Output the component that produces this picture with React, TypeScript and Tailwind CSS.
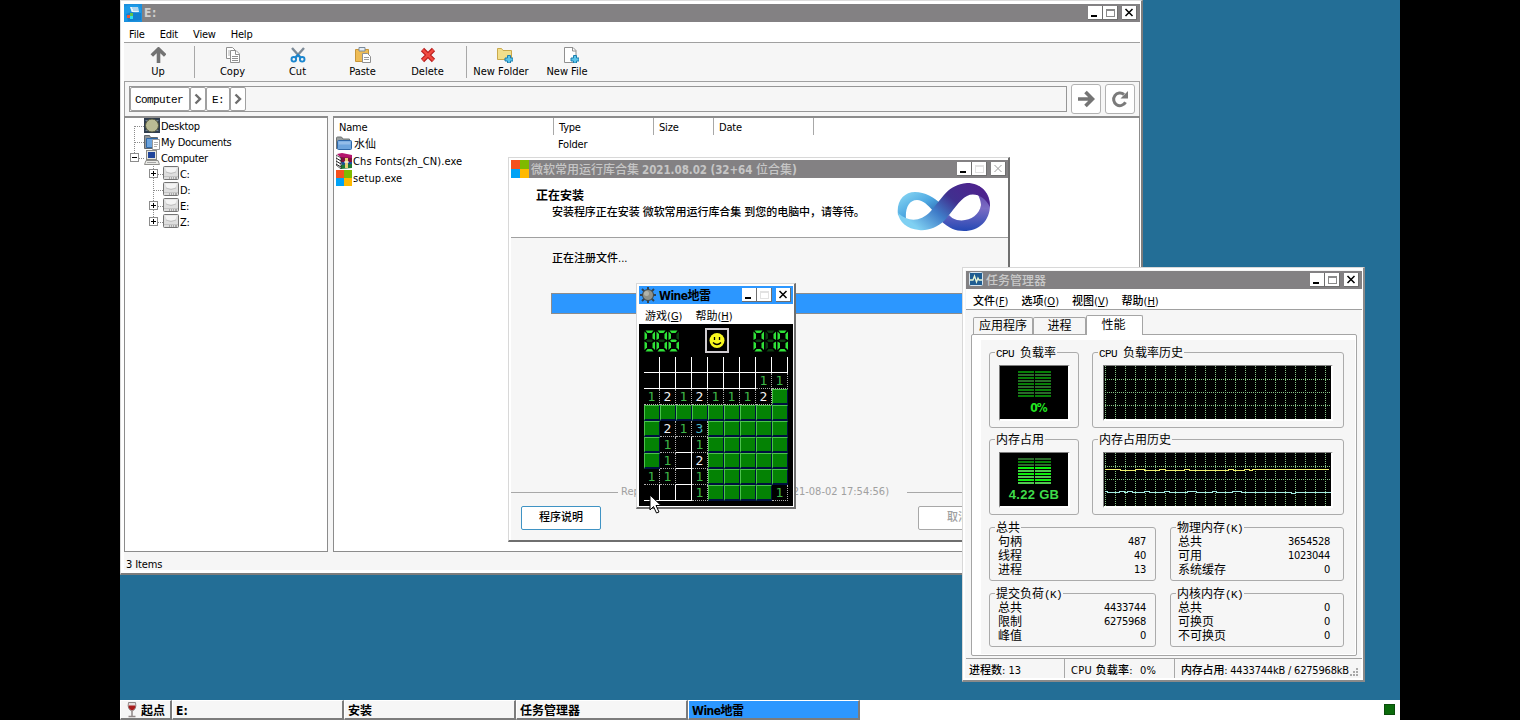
import React from "react";

const UI_FONT = "font-['DejaVu_Sans_Condensed','DejaVu_Sans','Noto_Sans_CJK_SC',sans-serif]";
const MONO_FONT = "font-['Liberation_Mono','Noto_Sans_CJK_SC',monospace]";

interface WindowButtonsProps {
  dimMax?: boolean;
  dimClose?: boolean;
}

const WindowButtons: React.FC<WindowButtonsProps> = ({ dimMax, dimClose }) => {
  const box = "h-[14px] w-[15px] border-r border-b border-[#6e6e6e] bg-white";
  return (
    <div className={`ml-auto flex shrink-0 pt-[2px] ${dimMax ? "pr-[2px]" : "pr-[3px]"}`}>
      <svg className={box} viewBox="0 0 14 13" shapeRendering="crispEdges">
        <rect x="3" y="9" width="6" height="2" fill="#000" />
      </svg>
      <svg className={box} viewBox="0 0 14 13" shapeRendering="crispEdges">
        <path d="M3.5 3.5h8v7h-8z" fill="none" stroke={dimMax ? "#e2e2e2" : "#8a8a8a"} />
        <path d="M3 3h9v1.5H3z" fill={dimMax ? "#e2e2e2" : "#8a8a8a"} />
      </svg>
      <svg className={`${box} ml-[4px]`} viewBox="0 0 14 13">
        <path d="M3.5 3l7 7M10.5 3l-7 7" stroke={dimClose ? "#9a9a9a" : "#000"} strokeWidth={dimClose ? 1 : 1.5} />
      </svg>
    </div>
  );
};

const WindowsFlag = ({ size }: { size: number }) => (
  <svg width={size} height={size} viewBox="0 0 16 16" className="shrink-0" shapeRendering="crispEdges">
    <rect width="8" height="8" fill="#f6511d" />
    <rect x="8" width="8" height="8" fill="#7fba00" />
    <rect y="8" width="8" height="8" fill="#00a2f5" />
    <rect x="8" y="8" width="8" height="8" fill="#ffb900" />
  </svg>
);

/* ---------- file manager ---------- */

const ExplorerIcon = () => (
  <svg width="18" height="18" viewBox="0 0 18 18">
    <rect width="18" height="18" fill="#1b8fdc" />
    <path d="M0 3l5-2h9l3 3v10l-17 3z" fill="#1b9ae8" />
    <path d="M6 3h8l1 5-7 1z" fill="#e8f4fb" />
    <path d="M8 4h6M9 6h6" stroke="#7fb9e0" />
    <path d="M2 10l6-2 9 1v7l-13 1z" fill="#1280cf" />
    <rect x="3" y="11" width="3" height="3" fill="#ee5535" />
    <rect x="6" y="9" width="3" height="3" fill="#62c14b" />
    <rect x="6" y="12" width="3" height="3" fill="#2be0f0" />
  </svg>
);

const icons: Record<string, React.ReactNode> = {
  up: <path d="M8.500 16V3M1.800 8.500L8.500 2l6.700 6.500" fill="none" stroke="#737373" strokeWidth="3.600" />,
  copy: (
    <g fill="#fff" stroke="#909090">
      <path d="M1.500.5h6l3 3v8h-9z" />
      <path d="M3 4h2M3 6h2M3 8h2" stroke="#b5b5b5" />
      <path d="M5.500 3.500h5.500l3.500 3.500v8.500h-9z" />
      <path d="M10.500 4v3.500h4M7 9.500h6M7 11.500h6M7 13.500h6" />
    </g>
  ),
  cut: (
    <g fill="none">
      <path d="M2 1l8 9M14 1l-8 9" stroke="#7d8b98" strokeWidth="2.400" />
      <circle cx="3.800" cy="12.300" r="2.300" stroke="#1b86cf" strokeWidth="1.900" />
      <circle cx="12.200" cy="12.300" r="2.300" stroke="#1b86cf" strokeWidth="1.900" />
      <path d="M5.500 10.500L8 8l2.500 2.500" stroke="#1b86cf" strokeWidth="2.200" />
    </g>
  ),
  paste: (
    <g>
      <path d="M.5 2.500h13v12h-13z" fill="#eebc56" stroke="#c79539" />
      <path d="M4 .5h6v3.500H4z" fill="#e6edf4" stroke="#7b8b9b" />
      <path d="M7.500 6.500h5l3 3v6h-8z" fill="#fff" stroke="#909090" />
      <path d="M9 10.500h5M9 12.500h5" stroke="#9e9e9e" />
    </g>
  ),
  delete: (
    <g fill="none">
      <path d="M2.500 2.500l11 11M13.500 2.500l-11 11" stroke="#b81c1c" strokeWidth="4.600" />
      <path d="M2.800 2.800l10.400 10.400M13.200 2.800L2.800 13.200" stroke="#f04a40" strokeWidth="2.600" />
    </g>
  ),
  newFolder: (
    <g>
      <path d="M.5 1.500h4l1.500 2h8.500v9H.5z" fill="#f2df8b" stroke="#c9a94c" />
      <path d="M10.500 8.500h3v2.500H16v3h-2.500v2h-3v-2H8v-3h2.500z" fill="#5bc4ea" stroke="#1d7fae" />
    </g>
  ),
  newFile: (
    <g>
      <path d="M1.500.5h8.500l3 3v12H1.500z" fill="#fff" stroke="#909090" />
      <path d="M9.500.5v3.500H13" fill="none" stroke="#909090" />
      <path d="M10.500 8.500h3v2.500H16v3h-2.500v2h-3v-2H8v-3h2.500z" fill="#5bc4ea" stroke="#1d7fae" />
    </g>
  ),
};

const ToolButton = ({ icon, label, className = "w-[65px]" }: { icon: string; label: string; className?: string }) => (
  <div className={`flex flex-col items-center pt-[4px] ${className}`}>
    <svg width="16" height="16" viewBox="0 0 16 16">
      {icons[icon]}
    </svg>
    <span className="mt-[2px] leading-[14px] whitespace-nowrap">{label}</span>
  </div>
);

const DesktopIcon = () => (
  <svg width="16" height="16" viewBox="0 0 16 16">
    <rect width="16" height="15" fill="#2f3d4e" />
    <path d="M1 2h3v3M15 2h-3v3M1 13h3v-3M15 13h-3v-3" fill="#6f8296" />
    <circle cx="8" cy="7.500" r="6.500" fill="#b9bb94" stroke="#55583f" />
  </svg>
);

const DocumentsIcon = () => (
  <svg width="16" height="16" viewBox="0 0 16 16">
    <path d="M.5 14.500v-13h5l1 2h7v11z" fill="#8f9498" stroke="#60676d" />
    <path d="M2.500 4.500h11v9h-11z" fill="#6ba3dd" stroke="#2f67a5" />
    <path d="M8.500 5.500h7v10h-7z" fill="#fff" stroke="#9a9a9a" />
    <path d="M10 8.500h4M10 10.500h4M10 12.500h3" stroke="#b0b0b0" />
  </svg>
);

const ComputerIcon = () => (
  <svg width="16" height="16" viewBox="0 0 16 16">
    <rect x="2.500" y=".5" width="10" height="9" fill="#e6e6e0" stroke="#8b8b86" />
    <rect x="4" y="2" width="7" height="6" fill="#20459b" />
    <path d="M2 10.500h12l1.500 4H.5z" fill="#ebebe7" stroke="#8e8e8b" />
    <path d="M3 12.500h9" stroke="#a6a6a6" />
  </svg>
);

const DriveIcon = () => (
  <svg width="16" height="16" viewBox="0 0 16 16">
    <rect x=".5" y=".5" width="15" height="13" rx="1" fill="#dedede" stroke="#747474" />
    <path d="M2 1.500h12l-2 5H4z" fill="#f4f4f4" />
    <path d="M3 6q5 3 10 0" fill="none" stroke="#c0c0c0" />
    <path d="M1 10.500h14" stroke="#c4c4c4" />
    <path d="M6 12h1M8 12h1M10 12h1M12 12h2" stroke="#777" />
  </svg>
);

const FolderIcon = () => (
  <svg width="16" height="16" viewBox="0 0 16 16">
    <path d="M.5 13V2q0-1 1-1h4l1.500 2h6.500v3" fill="#999e9e" stroke="#6f7475" />
    <rect x="1.500" y="4.500" width="14" height="9" rx="1" fill="#6ea5dd" stroke="#2f68a8" />
    <path d="M2.500 5.500h12v3h-12z" fill="#94bde8" />
  </svg>
);

const ArchiveIcon = () => (
  <svg width="16" height="16" viewBox="0 0 16 16">
    <path d="M1 1l5-1 10 2v4L5 5z" fill="#b5156d" />
    <path d="M4 4l12 1v4L5 9z" fill="#7e123f" />
    <path d="M5 9h11v3l-10 1z" fill="#1c4f96" />
    <path d="M4 12l12-1v4l-11 1z" fill="#1f7a35" />
    <path d="M0 2l5 3v11l-5-4z" fill="#fff" stroke="#222" strokeWidth=".7" />
    <path d="M0 5l5 3M0 8l5 3M0 11l5 3" stroke="#222" />
    <path d="M9 5h3v10H9z" fill="#e8cf79" />
    <path d="M8 9h5" stroke="#fff" />
  </svg>
);

// Dotted connector lines drawn in front of every tree node
const TreeLines = ({ width, d, box }: { width: number; d: string; box?: "+" | "-" }) => (
  <svg width={width} height="16" viewBox={`0 0 ${width} 16`} shapeRendering="crispEdges" className="shrink-0">
    <path d={d} fill="none" stroke="#8c8c8c" strokeDasharray="1 1" />
    {box && (
      <g>
        <rect x={width - 13.5} y="3.500" width="8" height="8" fill="#fff" stroke="#8c8c8c" />
        <path d={box === "+" ? `M${width - 12} 7.500h5M${width - 9.5} 5v5` : `M${width - 12} 7.500h5`} stroke="#000" />
      </g>
    )}
  </svg>
);

const FileTree = () => (
  <div className="w-[204px] border border-t-2 border-[#8c8c8c] bg-white leading-[17px] tracking-[-0.300px]">
    <div className="flex h-[16px]">
      <TreeLines width={19} d="M9.500 8v8M9.500 8.500h10" />
      <DesktopIcon />
      <span className="ml-[1px]">Desktop</span>
    </div>
    <div className="flex h-[16px]">
      <TreeLines width={19} d="M9.500 0v16M9.500 8.500h10" />
      <DocumentsIcon />
      <span className="ml-[1px]">My Documents</span>
    </div>
    <div className="flex h-[16px]">
      <TreeLines width={19} d="M9.500 0v8M9.500 8.500h10" box="-" />
      <ComputerIcon />
      <span className="ml-[1px]">Computer</span>
    </div>
    {["C:", "D:", "E:", "Z:"].map((drive) => (
      <div className="flex h-[16px]" key={drive}>
        <TreeLines
          width={38}
          d={drive === "Z:" ? "M28.500 0v8M28.500 8.500h10" : "M28.500 0v16M28.500 8.500h10"}
          box={drive === "D:" ? undefined : "+"}
        />
        <DriveIcon />
        <span className="ml-[1px]">{drive}</span>
      </div>
    ))}
  </div>
);

const FileList = () => (
  <div className="ml-[5px] flex-1 border border-t-2 border-[#8c8c8c] bg-white">
    <div className="flex h-[17px] leading-[19px] tracking-[-0.200px]">
      <div className="w-[220px] border-r border-[#a8a8a8] pl-[5px]">Name</div>
      <div className="w-[100px] border-r border-[#a8a8a8] pl-[5px]">Type</div>
      <div className="w-[60px] border-r border-[#a8a8a8] pl-[5px]">Size</div>
      <div className="w-[100px] border-r border-[#a8a8a8] pl-[5px]">Date</div>
    </div>
    <div className="mt-[1px] pl-[2px] leading-[17px] tracking-[0.100px]">
      <div className="flex h-[17px]">
        <FolderIcon />
        <span className="ml-[2px] w-[204px]">水仙</span>
        <span className="tracking-[-0.200px]">Folder</span>
      </div>
      <div className="flex h-[17px]">
        <ArchiveIcon />
        <span className="ml-[1px]">Chs Fonts(zh_CN).exe</span>
      </div>
      <div className="flex h-[17px]">
        <WindowsFlag size={16} />
        <span className="ml-[1px]">setup.exe</span>
      </div>
    </div>
  </div>
);

const Chevron = () => (
  <div className="flex w-[16px] items-center justify-center rounded-[2px] border border-[#a0a0a0] bg-white">
    <svg width="8" height="12" viewBox="0 0 8 12">
      <path d="M1.500 1.500L6 6l-4.500 4.500" fill="none" stroke="#6e6e6e" strokeWidth="2.400" />
    </svg>
  </div>
);

const FileManager = () => (
  <div className="absolute top-0 left-0 flex h-[575px] w-[1023px] flex-col border-t border-r-2 border-b-2 border-l border-[#7d7d7d] border-t-[#dcdcdc] border-l-[#dcdcdc] bg-white pt-[3px] pr-px pl-[3px]">
    <div className="flex h-[18px] shrink-0 bg-[#838183] text-[#cfcfcf]">
      <ExplorerIcon />
      <span className="ml-[2px] text-[12px] leading-[19px] font-bold tracking-[0.500px]">E:</span>
      <WindowButtons />
    </div>
    <div className="flex h-[20px] shrink-0 gap-[15px] pl-[5px] leading-[25px] tracking-[-0.200px]">
      <span>File</span>
      <span>Edit</span>
      <span>View</span>
      <span>Help</span>
    </div>
    <div className="flex h-[39px] shrink-0 border-t border-[#a0a0a0] bg-[#f6f6f6]">
      <ToolButton icon="up" label="Up" className="w-[68px]" />
      <div className="my-[3px] ml-[2px] w-px bg-[#a8a8a8]" />
      <div className="w-[5px]" />
      <ToolButton icon="copy" label="Copy" />
      <ToolButton icon="cut" label="Cut" />
      <ToolButton icon="paste" label="Paste" />
      <ToolButton icon="delete" label="Delete" />
      <div className="my-[3px] ml-[6px] w-px bg-[#a8a8a8]" />
      <ToolButton icon="newFolder" label="New Folder" className="w-[68px] [&>svg]:ml-[7px]" />
      <ToolButton icon="newFile" label="New File" className="w-[64px] [&>svg]:ml-[7px]" />
    </div>
    <div className="flex h-[35px] shrink-0 border-t border-r border-l border-[#a0a0a0] bg-[#f6f6f6] px-[4px]">
      <div className="mt-[4px] flex h-[26px] w-[939px] border border-[#969696]">
        <div
          className={`w-[60px] rounded-[2px] border border-[#a0a0a0] bg-white pl-[4px] text-[11px] leading-[24px] tracking-[-0.600px] ${MONO_FONT}`}
        >
          Computer
        </div>
        <Chevron />
        <div
          className={`w-[24px] rounded-[2px] border border-[#a0a0a0] bg-white pl-[5px] text-[11px] leading-[24px] tracking-[-0.600px] ${MONO_FONT}`}
        >
          E:
        </div>
        <Chevron />
      </div>
      <div className="mt-[2px] ml-[4px] flex size-[30px] items-center justify-center rounded-[3px] border border-[#b2b2b2] bg-white">
        <svg width="18" height="18" viewBox="0 0 18 18" fill="none" stroke="#747474" strokeWidth="3.600">
          <path d="M1 9h14M8.500 2L15.500 9l-7 7" />
        </svg>
      </div>
      <div className="mt-[2px] ml-[4px] flex size-[30px] items-center justify-center rounded-[3px] border border-[#b2b2b2] bg-white">
        <svg width="18" height="18" viewBox="0 0 18 18">
          <path d="M14.500 12.300A6.300 6.300 0 1 1 13 4.500" fill="none" stroke="#7a7a7a" strokeWidth="3" />
          <path d="M17 1v7.500H9.500z" fill="#7a7a7a" />
        </svg>
      </div>
    </div>
    <div className="flex h-[436px] shrink-0 bg-[#f6f6f6]">
      <FileTree />
      <FileList />
    </div>
    <div className="h-[18px] shrink-0 bg-[#f6f6f6] pl-[2px] leading-[25px] tracking-[-0.100px]">3 Items</div>
  </div>
);

/* ---------- installer ---------- */

const InfinityLogo = () => (
  <svg width="94" height="48" viewBox="0 0 94 48">
    <defs>
      <linearGradient id="loopLeft" x1="0" y1="0" x2="1" y2="1">
        <stop offset="0" stopColor="#8fdcf5" />
        <stop offset=".5" stopColor="#4fa9e2" />
        <stop offset="1" stopColor="#1d4f9e" />
      </linearGradient>
      <linearGradient id="loopBand" x1="0" y1=".6" x2="1" y2="0">
        <stop offset="0" stopColor="#7fd0f2" />
        <stop offset=".3" stopColor="#3f7cc8" />
        <stop offset=".55" stopColor="#40308f" />
        <stop offset="1" stopColor="#531d8d" />
      </linearGradient>
      <linearGradient id="loopEnd" x1="0" y1="0" x2="0" y2="1">
        <stop offset="0" stopColor="#5b3fa5" />
        <stop offset=".5" stopColor="#7a6cc4" />
        <stop offset="1" stopColor="#2448b4" />
      </linearGradient>
    </defs>
    <path d="M1 32C-1 18 7 9 18 9C28 9 37 14 44 21L36 28C31 22 26 17 20 17C12 17 8 25 9 36Z" fill="url(#loopLeft)" />
    <path
      d="M44 38C52 45 58 48 67 48C82 48 93 38 93 22C93 14 89 7 82 3C76 6 84 14 84 22C82 33 72 39 60 37C56 36 54 34 52 32Z"
      fill="url(#loopEnd)"
    />
    <path
      d="M1 30C12 40 24 38 33 29C46 15 50 2 70 0C84 0 93 10 93 24C88 14 78 9 70 13C62 17 56 28 48 37C40 45 30 48 22 47C10 46 2 39 1 30Z"
      fill="url(#loopBand)"
    />
  </svg>
);

const Installer = () => (
  <div className="absolute top-[157px] left-[388px] flex h-[385px] w-[502px] flex-col border-t border-r-2 border-b-2 border-l border-[#6f6f6f] border-t-[#d8d8d8] border-l-[#d8d8d8] bg-[#f6f6f6] pt-[2px] pl-[2px] shadow-[inset_1px_1px_0_1px_#fff]">
    <div className="flex h-[18px] shrink-0 bg-[#838183] text-[#c6c6c6]">
      <WindowsFlag size={18} />
      <span className="ml-[2px] text-[12px] leading-[20px] font-medium whitespace-pre">
        微软常用运行库合集
        <span className="ml-[3px] text-[11.500px] font-bold tracking-[-0.050px]">2021.08.02 (32+64 </span>
        位合集<span className="font-bold">)</span>
      </span>
      <WindowButtons dimMax dimClose />
    </div>
    <div className="flex h-[60px] shrink-0 border-b border-[#a0a0a0] bg-white">
      <div className="w-[386px] pt-[10px] pl-[25px]">
        <div className="text-[12px] leading-[17px] font-bold">正在安装</div>
        <div className="pl-[16px] leading-[16px] font-medium tracking-[-0.050px] whitespace-pre">
          安装程序正在安装 微软常用运行库合集 到您的电脑中，请等待。
        </div>
      </div>
      <div className="pt-[5px]">
        <InfinityLogo />
      </div>
    </div>
    <div className="mt-[13px] pl-[41px] leading-[16px] font-medium">正在注册文件...</div>
    <div className="mt-[26px] ml-[40px] h-[21px] w-[420px] shrink-0 border border-[#8c8c8c] bg-[#2c97ff]" />
    <div className="mt-[169px] flex items-center leading-[18px] text-[#a0a0a0]">
      <div className="h-px w-[107px] bg-[#a8a8a8]" />
      <span className="ml-[3px] w-[162px]">Rep</span>
      <span className="w-[106px] text-right whitespace-nowrap">21-08-02 17:54:56)</span>
      <div className="ml-[18px] h-px flex-1 bg-[#a8a8a8]" />
    </div>
    <div className="mt-[5px] flex justify-between pr-[10px] pl-[10px] font-medium">
      <button className="h-[24px] w-[80px] rounded-[2px] border border-[#3f93c4] bg-white">程序说明</button>
      <button className="h-[24px] w-[80px] rounded-[2px] border border-[#a8a8a8] bg-white text-[#a0a0a0]">取消</button>
    </div>
  </div>
);

/* ---------- minesweeper ---------- */

// "." is an opened empty field, "#" is still covered
const FIELD = [
  ".........",
  ".......11",
  "12121112#",
  "#########",
  "#213#####",
  "#1.1#####",
  "#1.2#####",
  "11.1#####",
  "...1####1",
];

const DIGIT_COLORS: Record<string, string> = {
  "1": "text-[#3fb548]",
  "2": "text-[#f2f2f2]",
  "3": "text-[#49b5c4]",
};

const Field = ({ value }: { value: string }) => {
  if (value === "#") {
    return (
      <div className="size-[16px] border-t border-r border-b-2 border-l border-[#001040] border-t-[#4cc24c] border-l-[#4cc24c] bg-[#048204]" />
    );
  }
  if (value === ".") {
    return <div className="size-[16px] border-r border-b border-white" />;
  }
  return (
    <div
      className={`size-[16px] border-r border-b border-dotted border-[#b0b0b0] text-center font-['DejaVu_Sans_Mono',monospace] text-[13px] leading-[16px] ${DIGIT_COLORS[value]}`}
    >
      {value}
    </div>
  );
};

const SEGMENTS = [
  "M1.500.5h8l-2 2.500h-4z",
  "M11 1.500v8.500l-2.500-1.500V4z",
  "M11 11.500v8.500l-2.500-2.500V13z",
  "M1.500 21.500h8l-2-2.500h-4z",
  "M.5 11.500v8.500L3 17.500V13z",
  "M.5 1.500v8.500L3 8.500V4z",
  "M2 10.800l1.500-1.200h4l1.500 1.200L7.500 12h-4z",
];

const LIT: Record<string, number[]> = {
  "0": [0, 1, 2, 3, 4, 5],
  "1": [1, 2],
  "6": [0, 2, 3, 4, 5, 6],
};

const Led = ({ value }: { value: string }) => (
  <div className="flex">
    {value.split("").map((digit, i) => (
      <svg key={i} width="12" height="22" viewBox="0 0 12 22">
        {SEGMENTS.map((d, s) => (
          <path key={s} d={d} fill={LIT[digit].includes(s) ? "#2fe338" : "#0b3f10"} />
        ))}
      </svg>
    ))}
  </div>
);

const Minesweeper = () => (
  <div className="absolute top-[283px] left-[516px] flex h-[226px] w-[160px] flex-col border-t border-r-2 border-b-2 border-l border-[#6f6f6f] border-t-[#d8d8d8] border-l-[#d8d8d8] bg-white pt-[2px] pr-px pb-px pl-[2px]">
    <div className="flex h-[18px] shrink-0 bg-[#2c97ff]">
      <svg width="18" height="18" viewBox="0 0 18 18">
        <path d="M9 1v16M1 9h16M3 3l12 12M15 3L3 15" stroke="#33424f" strokeWidth="2" />
        <circle cx="9" cy="9" r="5.500" fill="#8e9188" stroke="#3c4548" />
        <circle cx="7.500" cy="7.500" r="2.500" fill="#b0b3aa" />
      </svg>
      <span className="ml-[2px] text-[12px] leading-[20px] font-bold tracking-[-0.500px]">Wine地雷</span>
      <WindowButtons dimMax />
    </div>
    <div className="flex h-[20px] shrink-0 gap-[13px] pl-[6px] leading-[25px]">
      <span>
        游戏(<u>G</u>)
      </span>
      <span>
        帮助(<u>H</u>)
      </span>
    </div>
    <div className="flex-1 bg-black">
      <div className="flex h-[33px] items-start justify-between pr-[4px] pl-[5px]">
        <div className="pt-[6px]">
          <Led value="006" />
        </div>
        <svg width="24" height="25" viewBox="0 0 24 25" className="mt-[4px]">
          <rect x="1" y="1" width="22" height="23" fill="#000" stroke="#d0ccd0" strokeWidth="2" />
          <circle cx="12" cy="12.500" r="7.500" fill="#f7f71e" />
          <path d="M9.500 9v3M14.500 9v3M8 14.500q4 4 8 0" fill="none" stroke="#000" strokeWidth="1.300" />
        </svg>
        <div className="pt-[6px]">
          <Led value="010" />
        </div>
      </div>
      <div className="ml-[5px] grid w-[144px] grid-cols-9">
        {FIELD.join("")
          .split("")
          .map((value, i) => (
            <Field key={i} value={value} />
          ))}
      </div>
    </div>
  </div>
);

/* ---------- task manager ---------- */

interface GroupBoxProps {
  title: string;
  className: string;
  children: React.ReactNode;
}

const GroupBox: React.FC<GroupBoxProps> = ({ title, className, children }) => (
  <div className={`rounded-[3px] border border-[#ababab] ${className}`}>
    <div className="-mt-[7px] ml-[5px] h-[14px] w-fit bg-[#f6f6f6] px-px text-[12px] leading-[14px] whitespace-pre">
      {title.split(/([\x20-\x7e]+)/).map((part, i) => (
        <span key={i} className={i % 2 ? `text-[11px] tracking-[-0.600px] ${MONO_FONT}` : ""}>
          {part}
        </span>
      ))}
    </div>
    {children}
  </div>
);

const Screen = ({ children, className }: { children: React.ReactNode; className: string }) => (
  <div
    className={`border-t border-r-2 border-b-2 border-l border-white border-t-[#7d7d7d] border-l-[#7d7d7d] bg-black ${className}`}
  >
    {children}
  </div>
);

const Meter = ({ colors, children }: { colors: string[]; children: React.ReactNode }) => (
  <Screen className="mt-[5px] ml-[9px] flex h-[56px] w-[71px] flex-col items-center pt-[5px]">
    <svg width="33" height="27" viewBox="0 0 33 27" shapeRendering="crispEdges" className="shrink-0">
      {colors.map((color, i) => (
        <g key={i} fill={color}>
          <rect y={i * 3} width="16" height="2" />
          <rect x="17" y={i * 3} width="16" height="2" />
        </g>
      ))}
    </svg>
    {children}
  </Screen>
);

const History = ({ rows, children }: { rows: number[]; children?: React.ReactNode }) => (
  <Screen className="mt-[5px] ml-[10px] h-[56px] w-[230px]">
    <svg width="227" height="53" viewBox="0 0 227 53" shapeRendering="crispEdges">
      <g stroke="#86c486" strokeDasharray="1 1">
        {Array.from({ length: 23 }, (_, i) => (
          <path key={i} d={`M${i * 10 + 1.5} 0V53`} />
        ))}
        {rows.map((y) => (
          <path key={y} d={`M1 ${y + 0.5}H227`} />
        ))}
      </g>
      {children}
    </svg>
  </Screen>
);

const CPU_METER = ["#078007", "#2a6b2a", "#078007", "#2a6b2a", "#078007", "#2a6b2a", "#078007", "#2a6b2a", "#078007"];
const MEM_METER = ["#2a6b2a", "#078007", "#2a6b2a", "#0df20d", "#4fc94f", "#0df20d", "#4fc94f", "#0df20d", "#4fc94f"];

const Stats = ({ rows, className }: { rows: [string, string][]; className: string }) => (
  <div className={className}>
    {rows.map(([name, value]) => (
      <div key={name} className="flex h-[14px] justify-between leading-[14px]">
        <span className="text-[12px]">{name}</span>
        <span className="tracking-[-0.300px]">{value}</span>
      </div>
    ))}
  </div>
);

const TaskManager = () => (
  <div className="absolute top-[267px] left-[842px] flex h-[415px] w-[403px] flex-col border-t border-r-2 border-b-2 border-l border-[#8a8a8a] border-t-[#d8d8d8] border-l-[#d8d8d8] bg-[#f6f6f6] pt-[3px] pr-px pl-[3px] shadow-[inset_0_0_0_2px_#fff]">
    <div className="flex h-[18px] shrink-0 bg-[#838183] text-[#c9c9c9]">
      <svg width="14" height="14" viewBox="0 0 14 14" className="mt-[1px] ml-[3px]">
        <rect x=".5" y=".5" width="13" height="13" rx="1" fill="#1f5d92" stroke="#d6e4ee" />
        <path d="M1 8h3l1.500-4 2 6L9 6l1 2h3" fill="none" stroke="#e8f6d8" strokeWidth="1.300" />
      </svg>
      <span className="ml-[3px] text-[12px] leading-[20px] font-medium">任务管理器</span>
      <WindowButtons />
    </div>
    <div className="flex h-[21px] shrink-0 gap-[13px] border-b border-[#a0a0a0] bg-white pl-[7px] leading-[25px] font-medium">
      {[
        ["文件", "F"],
        ["选项", "O"],
        ["视图", "V"],
        ["帮助", "H"],
      ].map(([label, key]) => (
        <span key={key}>
          {label}(<u>{key}</u>)
        </span>
      ))}
    </div>
    <div className="z-10 flex h-[24px] shrink-0 items-end pl-[7px] text-center text-[12px]">
      <div className="h-[17px] w-[60px] rounded-t-[2px] border border-b-0 border-[#a5a5a5] leading-[16px]">应用程序</div>
      <div className="h-[17px] w-[53px] rounded-t-[2px] border border-b-0 border-[#a5a5a5] leading-[16px]">进程</div>
      <div className="-mb-px h-[20px] w-[57px] rounded-t-[2px] border border-b-0 border-[#a5a5a5] bg-white pr-[2px] leading-[18px]">
        性能
      </div>
    </div>
    <div className="ml-[5px] flex h-[322px] w-[386px] shrink-0 rounded-[2px] border border-[#a5a5a5] bg-white pt-[5px] pb-px pl-[9px]">
      <div className="w-[374px] bg-[#f6f6f6] pt-[12px] pl-[8px]">
        <div className="flex gap-[13px]">
          <GroupBox title="CPU 负载率" className="h-[76px] w-[90px]">
            <Meter colors={CPU_METER}>
              <span className="mt-[2px] ml-[9px] text-[12px] leading-[16px] font-bold tracking-[-0.800px] text-[#22e822]">
                0%
              </span>
            </Meter>
          </GroupBox>
          <GroupBox title="CPU 负载率历史" className="h-[76px] w-[252px]">
            <History rows={[13, 26, 39]} />
          </GroupBox>
        </div>
        <div className="mt-[11px] flex gap-[13px]">
          <GroupBox title="内存占用" className="h-[76px] w-[90px]">
            <Meter colors={MEM_METER}>
              <span className="mt-[2px] font-['Liberation_Sans',sans-serif] text-[13px] leading-[16px] font-bold tracking-[0.300px] whitespace-nowrap text-[#3fdc4a]">
                4.22 GB
              </span>
            </Meter>
          </GroupBox>
          <GroupBox title="内存占用历史" className="h-[76px] w-[252px]">
            <History rows={[13, 26]}>
              <path
                d="M1 16.500h15v1h15v-1h9v1h15v-1h6v1h19v-1h5v1h39v-1h5v1h11v-1h5v1h3v-1h77"
                fill="none"
                stroke="#f2ef6e"
              />
              <path
                d="M1 38.500h2v1h12v-1h5v1h3v-1h5v1h12v-1h5v1h15v-1h5v1h18v-1h9v1h16v-1h4v1h16v-1h9v1h50v1h4v-1h36"
                fill="none"
                stroke="#a5ece4"
              />
            </History>
          </GroupBox>
        </div>
        <div className="mt-[12px] flex gap-[14px]">
          <GroupBox title="总共" className="h-[54px] w-[167px]">
            <Stats
              className="pr-[9px] pl-[8px]"
              rows={[
                ["句柄", "487"],
                ["线程", "40"],
                ["进程", "13"],
              ]}
            />
          </GroupBox>
          <GroupBox title="物理内存(K)" className="h-[54px] w-[174px]">
            <Stats
              className="pr-[13px] pl-[7px]"
              rows={[
                ["总共", "3654528"],
                ["可用", "1023044"],
                ["系统缓存", "0"],
              ]}
            />
          </GroupBox>
        </div>
        <div className="mt-[12px] flex gap-[14px]">
          <GroupBox title="提交负荷(K)" className="h-[54px] w-[167px]">
            <Stats
              className="pr-[9px] pl-[8px]"
              rows={[
                ["总共", "4433744"],
                ["限制", "6275968"],
                ["峰值", "0"],
              ]}
            />
          </GroupBox>
          <GroupBox title="内核内存(K)" className="h-[54px] w-[174px]">
            <Stats
              className="pr-[13px] pl-[7px]"
              rows={[
                ["总共", "0"],
                ["可换页", "0"],
                ["不可换页", "0"],
              ]}
            />
          </GroupBox>
        </div>
      </div>
    </div>
    <div className="mt-[2px] flex h-[20px] shrink-0 border-t border-[#a0a0a0] leading-[23px] font-medium whitespace-pre">
      <div className="w-[99px] shrink-0 border-r border-[#a8a8a8] pl-[3px]">进程数: 13</div>
      <div className="w-[110px] shrink-0 border-r border-[#a8a8a8] pl-[6px] tracking-[0.300px]">CPU 负载率:  0%</div>
      <div className="pl-[6px] tracking-[-0.200px]">内存占用: 4433744kB / 6275968kB</div>
      <svg
        width="9"
        height="9"
        viewBox="0 0 9 9"
        className="mt-[9px] mr-[3px] ml-auto shrink-0"
        shapeRendering="crispEdges"
      >
        <path d="M6 0h2v2H6zM3 3h2v2H3zM6 3h2v2H6zM0 6h2v2H0zM3 6h2v2H3zM6 6h2v2H6z" fill="#a9a9a9" />
      </svg>
    </div>
  </div>
);

/* ---------- taskbar ---------- */

const Taskbar = () => {
  const item =
    "h-[20px] border-t border-l border-r-2 border-b-2 border-[#7c7c7c] border-t-white border-l-white pl-[3px] text-[12px] leading-[20px] font-bold";
  return (
    <div className="flex h-[20px] bg-white">
      <div className={`${item} flex w-[52px] bg-[#f6f6f6]`}>
        <svg width="16" height="17" viewBox="0 0 16 17">
          <path d="M4.500 1.500h7q1.500 7-3.500 8.500Q3 8.500 4.500 1.500z" fill="#e4dede" stroke="#8f8787" />
          <path d="M4.500 4.500h7q0 4-3.500 4.700Q4.500 8.500 4.500 4.500z" fill="#a71c1c" />
          <path d="M8 10v5M4.500 15.500h7" stroke="#8f8787" strokeWidth="1.500" />
        </svg>
        <span className="ml-[1px] whitespace-nowrap">起点</span>
      </div>
      <div className={`${item} w-[172px] bg-[#f6f6f6]`}>E:</div>
      <div className={`${item} w-[172px] bg-[#f6f6f6]`}>安装</div>
      <div className={`${item} w-[172px] bg-[#f6f6f6]`}>任务管理器</div>
      <div className={`${item} w-[172px] bg-[#2c97ff] tracking-[-0.500px]`}>Wine地雷</div>
      <div className="mt-[4px] mr-[5px] ml-auto size-[11px] border border-[#0a4d0a] bg-[#0b6b0b]" />
    </div>
  );
};

const App: React.FC = () => {
  return (
    <div className={`flex h-[720px] w-[1520px] justify-center overflow-hidden bg-black text-[11px] text-black ${UI_FONT}`}>
      <div className="relative flex w-[1280px] flex-col justify-end bg-[#236e96]">
        <FileManager />
        <Installer />
        <TaskManager />
        <Minesweeper />
        <svg width="14" height="21" viewBox="0 0 14 21" className="absolute top-[494px] left-[529px]">
          <path d="M1 1v15l3.500-3.500L7.500 19l2.500-1-3-6.500h5z" fill="#fff" stroke="#000" />
        </svg>
        <Taskbar />
      </div>
    </div>
  );
};

export default App;
